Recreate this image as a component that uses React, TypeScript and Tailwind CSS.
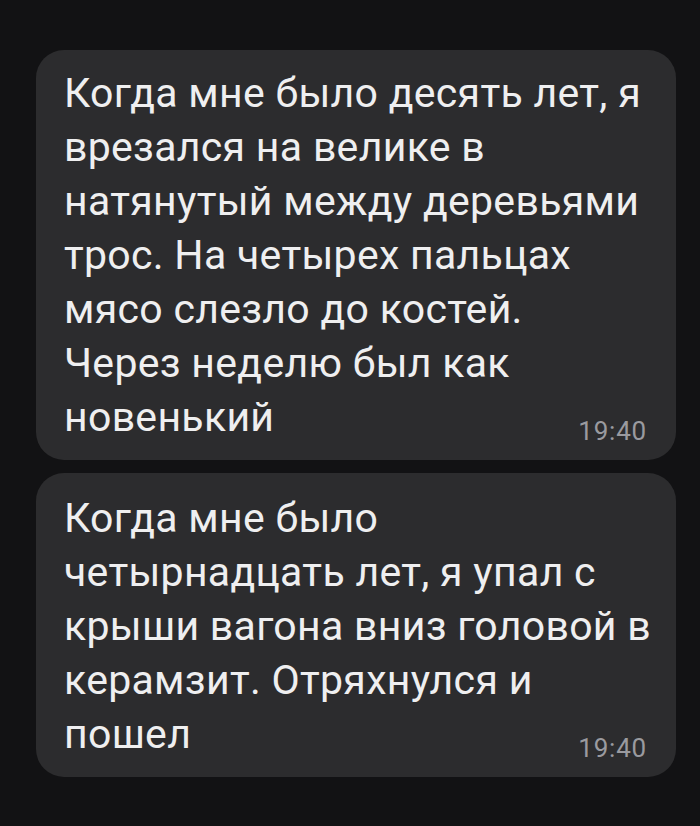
import React from "react";

const messages = [
  {
    lines: [
      "Когда мне было десять лет, я",
      "врезался на велике в",
      "натянутый между деревьями",
      "трос. На четырех пальцах",
      "мясо слезло до костей.",
      "Через неделю был как",
      "новенький",
    ],
    time: "19:40",
    pt: "pt-[16px]",
  },
  {
    lines: [
      "Когда мне было",
      "четырнадцать лет, я упал с",
      "крыши вагона вниз головой в",
      "керамзит. Отряхнулся и",
      "пошел",
    ],
    time: "19:40",
    pt: "pt-[18px]",
  },
];

export default function App() {
  return (
    <div
      className="w-[700px] h-[826px] bg-[#121214] pt-[50px] pl-[36px] pr-[24px] flex flex-col gap-[13px]"
      style={{ fontFamily: "Roboto, 'Noto Sans', sans-serif" }}
    >
      {messages.map((m, i) => (
        <div
          key={i}
          className={`relative bg-[#2c2c2e] rounded-[28px] pl-[28px] pr-[28px] pb-[16px] ${m.pt}`}
        >
          <div className="text-[41px] leading-[54px] tracking-[0.3px] text-[#efeff0]">
            {m.lines.map((l, j) => (
              <div key={j} className="whitespace-nowrap">
                {l}
              </div>
            ))}
          </div>
          <span className="absolute right-[29px] bottom-[16px] text-[26px] leading-[26px] text-[#9a9a9f] tracking-[0.8px]">
            {m.time}
          </span>
        </div>
      ))}
    </div>
  );
}
